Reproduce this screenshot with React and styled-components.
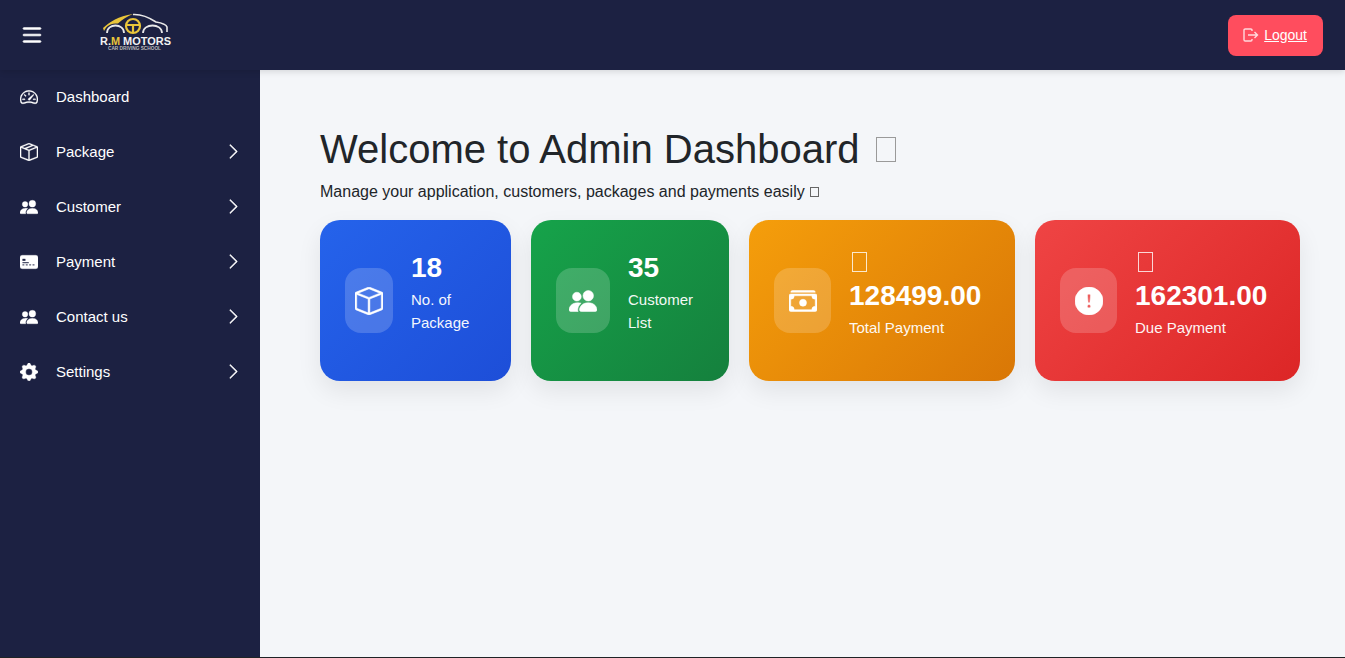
import React from "react";
import styled, { createGlobalStyle } from "styled-components";
import {
  BsBox,
  BsBoxSeam,
  BsCashStack,
  BsChevronRight,
  BsCreditCard2FrontFill,
  BsExclamationCircleFill,
  BsGearFill,
  BsList,
  BsPeopleFill,
  BsSpeedometer2,
} from "react-icons/bs";

const GlobalStyle = createGlobalStyle`
  * { box-sizing: border-box; }
  html, body { margin: 0; padding: 0; }
  body {
    font-family: "Liberation Sans", Arial, sans-serif;
    background: #1f2326;
    overflow: hidden;
  }
`;

const Page = styled.div`
  display: flex;
  flex-direction: column;
  height: 657px;
`;

const Topbar = styled.header`
  display: flex;
  align-items: center;
  justify-content: space-between;
  height: 70px;
  flex-shrink: 0;
  padding: 0 22px 0 19px;
  background: #1c2142;
  position: relative;
  box-shadow: 0 2px 6px rgba(0, 0, 0, 0.12);
`;

const Brand = styled.div`
  display: flex;
  align-items: center;
  gap: 55px;
  color: #fff;
  font-size: 26px;
  line-height: 1;
`;

const MenuIcon = styled(BsList)`
  stroke: currentColor;
  stroke-width: 0.5;
`;

const LogoutButton = styled.a`
  display: flex;
  align-items: center;
  gap: 5px;
  height: 41px;
  padding: 0 16px 0 15px;
  border-radius: 8px;
  background: #ff4d5e;
  color: #fff;
  font-size: 14px;
  text-decoration: underline;

  svg {
    color: #ffd9dd;
  }
`;

const Body = styled.div`
  display: flex;
  flex: 1;
  min-height: 0;
`;

const Sidebar = styled.nav`
  width: 260px;
  flex-shrink: 0;
  background: #1c2142;
`;

const NavRow = styled.div`
  display: flex;
  align-items: center;
  height: 55px;
  padding: 0 18px 2px 20px;
  color: #fff;
  font-size: 15px;

  svg:first-child {
    font-size: 18px;
    margin-right: 18px;
    flex-shrink: 0;
    stroke: currentColor;
    stroke-width: 0.25;
  }
  span {
    flex: 1;
  }
`;

const Chevron = styled(BsChevronRight)`
  font-size: 17px;
  stroke: currentColor;
  stroke-width: 0.4;
`;

const Main = styled.main`
  flex: 1;
  padding: 56px 44px 0 60px;
  background: #f4f6f9;
`;

const Title = styled.h1`
  margin: 0;
  font-size: 40px;
  font-weight: 400;
  line-height: 46px;
  color: #212529;
`;

const Subtitle = styled.p`
  margin: 8px 0 0;
  font-size: 16px;
  line-height: 24px;
  color: #212529;
`;

// a missing emoji glyph, shown by the browser as an empty box
const Tofu = styled.span`
  display: inline-block;
  width: ${(p) => p.$w}px;
  height: ${(p) => p.$h}px;
  margin-left: ${(p) => p.$left}px;
  border: 1px solid ${(p) => p.$color};
  vertical-align: ${(p) => p.$drop}px;
`;

const Cards = styled.div`
  display: grid;
  grid-template-columns: 191px 198px 266px 265px;
  gap: 20px;
  margin-top: 16px;
`;

const Card = styled.div`
  display: flex;
  align-items: center;
  gap: 18px;
  height: 161px;
  padding: 0 25px;
  border-radius: 20px;
  color: #fff;
  background: linear-gradient(135deg, ${(p) => p.$from}, ${(p) => p.$to});
  box-shadow: 0 10px 25px rgba(0, 0, 0, 0.08);
`;

const IconBox = styled.div`
  display: flex;
  align-items: center;
  justify-content: center;
  width: ${(p) => p.$width}px;
  height: 65px;
  flex-shrink: 0;
  border-radius: 16px;
  background: rgba(255, 255, 255, 0.18);
  font-size: 28px;

  svg {
    stroke: currentColor;
    stroke-width: 0.3;
  }
`;

const CardText = styled.div`
  padding-bottom: ${(p) => (p.$emoji ? 18 : 16)}px;
`;

const Value = styled.div`
  font-size: 28px;
  font-weight: 700;
  line-height: 34px;
`;

const Label = styled.div`
  margin-top: 3px;
  font-size: 15px;
  line-height: 23px;
  opacity: 0.95;
`;

const navItems = [
  { label: "Dashboard", icon: BsSpeedometer2 },
  { label: "Package", icon: BsBoxSeam, more: true },
  { label: "Customer", icon: BsPeopleFill, more: true },
  { label: "Payment", icon: BsCreditCard2FrontFill, more: true },
  { label: "Contact us", icon: BsPeopleFill, more: true },
  { label: "Settings", icon: BsGearFill, more: true },
];

const stats = [
  { value: "18", label: <>No. of<br />Package</>, icon: BsBox, from: "#2563eb", to: "#1d4ed8", width: 48 },
  { value: "35", label: <>Customer<br />List</>, icon: BsPeopleFill, from: "#16a34a", to: "#15803d", width: 54 },
  { value: "128499.00", label: "Total Payment", icon: BsCashStack, from: "#f59e0b", to: "#d97706", width: 57, emoji: true },
  { value: "162301.00", label: "Due Payment", icon: BsExclamationCircleFill, from: "#ef4444", to: "#dc2626", width: 57, emoji: true },
];

function Logo() {
  return (
    <svg width="72" height="44" viewBox="0 0 72 44">
      <path d="M3 15C10 9 18 3 33 1 27 3.5 22 6.5 18 10.5 11 10.5 7 12 4 18Z" fill="#e9c53a" />
      <path d="M33 1.5C42 1 50 5 56 9 62 10 66 11 67 14V19" fill="none" stroke="#e8e8e8" strokeWidth="1.6" />
      <path d="M7 20C7 10 24 10 24 20M43 20C43 10 62 10 62 20" fill="none" stroke="#e8e8e8" strokeWidth="1.8" />
      <circle cx="33" cy="13" r="7" fill="#1c2142" stroke="#e9c53a" strokeWidth="2.2" />
      <path d="M26.5 12H39.5M33 13V20" stroke="#e9c53a" strokeWidth="2.2" />
      <text x="0" y="32" textLength="71" lengthAdjust="spacingAndGlyphs" fontFamily="Liberation Sans" fontWeight="700" fontSize="11" fill="#f2f2f2">
        R.<tspan fill="#e9c53a">M</tspan> MOTORS
      </text>
      <text x="8" y="36.5" textLength="53" lengthAdjust="spacingAndGlyphs" fontFamily="Liberation Sans" fontWeight="700" fontSize="4.5" fill="#bbbbbb">
        CAR DRIVING SCHOOL
      </text>
    </svg>
  );
}

function LogoutIcon() {
  return (
    <svg width="16" height="14" viewBox="0 0 16 14" fill="none" stroke="currentColor" strokeWidth="1.4">
      <path d="M9 3V2.2C9 1.5 8.5 1 7.8 1H2.2C1.5 1 1 1.5 1 2.2V11.8C1 12.5 1.5 13 2.2 13H7.8C8.5 13 9 12.5 9 11.8V11" />
      <path d="M5 7H14.5M11.5 4L14.5 7 11.5 10" />
    </svg>
  );
}

export default function App() {
  return (
    <>
      <GlobalStyle />
      <Page>
        <Topbar>
          <Brand>
            <MenuIcon />
            <Logo />
          </Brand>
          <LogoutButton>
            <LogoutIcon />
            Logout
          </LogoutButton>
        </Topbar>
        <Body>
          <Sidebar>
            {navItems.map((item) => (
              <NavRow key={item.label}>
                <item.icon />
                <span>{item.label}</span>
                {item.more && <Chevron />}
              </NavRow>
            ))}
          </Sidebar>
          <Main>
            <Title>
              Welcome to Admin Dashboard <Tofu $w={20} $h={25} $left={5} $color="#9a9a9a" $drop={1} />
            </Title>
            <Subtitle>
              Manage your application, customers, packages and payments easily{" "}
              <Tofu $w={9} $h={10} $left={1} $color="#666666" $drop={0} />
            </Subtitle>
            <Cards>
              {stats.map((s) => (
                <Card key={s.value} $from={s.from} $to={s.to}>
                  <IconBox $width={s.width}>
                    <s.icon />
                  </IconBox>
                  <CardText $emoji={s.emoji}>
                    {s.emoji && (
                      <Value>
                        <Tofu $w={15} $h={20} $left={3} $color="rgba(255, 255, 255, 0.8)" $drop={-1} />
                      </Value>
                    )}
                    <Value>{s.value}</Value>
                    <Label>{s.label}</Label>
                  </CardText>
                </Card>
              ))}
            </Cards>
          </Main>
        </Body>
      </Page>
    </>
  );
}
